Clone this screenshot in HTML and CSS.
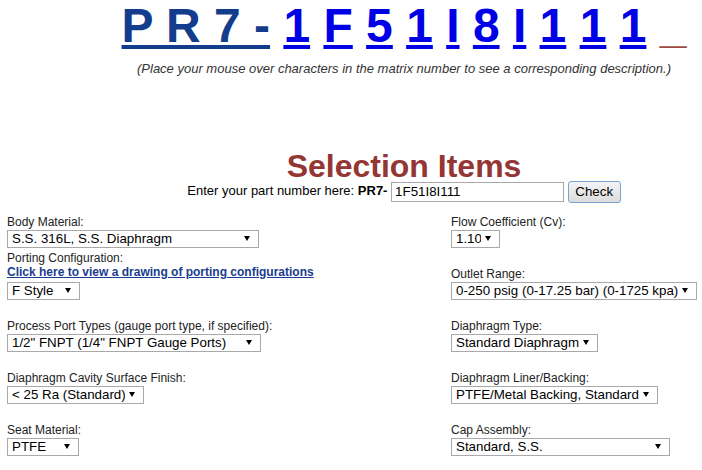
FILE: index.html
```html
<!DOCTYPE html>
<html lang="en">
<head>
    <meta charset="UTF-8">
    <title>PR7 Matrix Configurator</title>
    <link rel="stylesheet" href="styles.css">
</head>
<body>
    <div class="header">
        <div class="matrix">
            <span class="prefix">P R 7 -</span>
            <a href="#" class="code">1</a>
            <a href="#" class="code">F</a>
            <a href="#" class="code">5</a>
            <a href="#" class="code">1</a>
            <a href="#" class="code">I</a>
            <a href="#" class="code">8</a>
            <a href="#" class="code">I</a>
            <a href="#" class="code">1</a>
            <a href="#" class="code">1</a>
            <a href="#" class="code">1</a>
            <span class="blank">_</span>
        </div>
        <p class="hint">(Place your mouse over characters in the matrix number to see a corresponding description.)</p>

        <h1>Selection Items</h1>
        <form class="part-form">Enter your part number here: <b>PR7-</b> <input type="text" id="partInput" value="1F51I8I111"> <button type="button" id="checkButton">Check</button></form>
    </div>

    <div class="options">
        <div class="field">
            <label>Body Material:</label>
            <span class="select-wrap"><select class="w-body"><option>S.S. 316L, S.S. Diaphragm</option></select></span>
        </div>
        <div class="field">
            <label>Flow Coefficient (Cv):</label>
            <span class="select-wrap"><select class="w-flow"><option>1.10</option></select></span>
        </div>

        <div class="field">
            <label>Porting Configuration:</label>
            <a href="#" class="drawing-link">Click here to view a drawing of porting configurations</a>
            <span class="select-wrap"><select class="w-porting"><option>F Style</option></select></span>
        </div>
        <div class="field">
            <label>Outlet Range:</label>
            <span class="select-wrap"><select class="w-outlet"><option>0-250 psig (0-17.25 bar) (0-1725 kpa)</option></select></span>
        </div>

        <div class="field">
            <label>Process Port Types (gauge port type, if specified):</label>
            <span class="select-wrap"><select class="w-port"><option>1/2" FNPT (1/4" FNPT Gauge Ports)</option></select></span>
        </div>
        <div class="field">
            <label>Diaphragm Type:</label>
            <span class="select-wrap"><select class="w-diaphragm"><option>Standard Diaphragm</option></select></span>
        </div>

        <div class="field">
            <label>Diaphragm Cavity Surface Finish:</label>
            <span class="select-wrap"><select class="w-finish"><option>&lt; 25 Ra (Standard)</option></select></span>
        </div>
        <div class="field">
            <label>Diaphragm Liner/Backing:</label>
            <span class="select-wrap"><select class="w-liner"><option>PTFE/Metal Backing, Standard</option></select></span>
        </div>

        <div class="field">
            <label>Seat Material:</label>
            <span class="select-wrap"><select class="w-seat"><option>PTFE</option></select></span>
        </div>
        <div class="field">
            <label>Cap Assembly:</label>
            <span class="select-wrap"><select class="w-cap"><option>Standard, S.S.</option></select></span>
        </div>
    </div>
</body>
</html>
```

FILE: styles.css
```css
body {
    margin: 0;
    padding: 0 7px;
    font-family: "Liberation Sans", Arial, sans-serif;
    color: #000;
    background-color: #fff;
}

/* centred block sits a little right of the page middle */
.header {
    padding-left: 106px;
    text-align: center;
}

.matrix {
    font-size: 48px;
    font-weight: bold;
    line-height: 52px;
    white-space: nowrap;
}

.prefix {
    color: #143c8c;
    text-decoration: underline;
}

.code {
    color: #0000e6;
}

.blank {
    color: #9e4a3f;
}

.hint {
    margin: 10px 0 0;
    font-size: 13px;
    font-style: italic;
    line-height: 14px;
    color: #333;
}

h1 {
    margin: 76px 0 0;
    font-size: 32px;
    line-height: 28px;
    color: #943634;
}

.part-form {
    margin: 0;
    font-size: 13px;
    line-height: 22px;
}

.part-form input {
    box-sizing: border-box;
    width: 173px;
    height: 20px;
    padding: 1px 3px;
    border: 1px solid #a9a9a9;
    font-family: "Liberation Sans", Arial, sans-serif;
    font-size: 13.33px;
    vertical-align: middle;
}

.part-form button {
    box-sizing: border-box;
    width: 53px;
    height: 22px;
    padding: 0;
    border: 1px solid #7aa3d6;
    border-radius: 3px;
    background: linear-gradient(#f4f4f4, #dcdcdc);
    font-family: "Liberation Sans", Arial, sans-serif;
    font-size: 13.33px;
    color: #000;
    vertical-align: middle;
}

.options {
    display: grid;
    grid-template-columns: 444px 1fr;
    grid-template-rows: 45px repeat(4, 52px);
}

.field {
    display: flex;
    flex-direction: column;
    justify-content: flex-end;
    align-items: flex-start;
}

.field label {
    font-size: 12px;
    line-height: 14px;
    color: #222;
}

.drawing-link {
    font-size: 12px;
    font-weight: bold;
    line-height: 14px;
    color: #193d8f;
    margin-bottom: 2px;
}

.select-wrap {
    position: relative;
    display: inline-block;
}

.select-wrap::after {
    content: "";
    position: absolute;
    right: 9px;
    top: 7px;
    border-left: 3px solid transparent;
    border-right: 3px solid transparent;
    border-top: 5px solid #000;
    pointer-events: none;
}

select {
    -webkit-appearance: none;
    appearance: none;
    box-sizing: border-box;
    height: 18px;
    margin: 0;
    padding: 0 18px 0 4px;
    border: 1px solid #a9a9a9;
    border-radius: 0;
    background-color: #fff;
    font-family: "Liberation Sans", Arial, sans-serif;
    font-size: 13.33px;
    line-height: 16px;
    color: #000;
}

.w-body { width: 252px; }
.w-flow { width: 49px; }
.w-porting { width: 73px; }
.w-outlet { width: 246px; }
.w-port { width: 254px; }
.w-diaphragm { width: 147px; }
.w-finish { width: 137px; }
.w-liner { width: 207px; }
.w-seat { width: 72px; }
.w-cap { width: 219px; }
```
